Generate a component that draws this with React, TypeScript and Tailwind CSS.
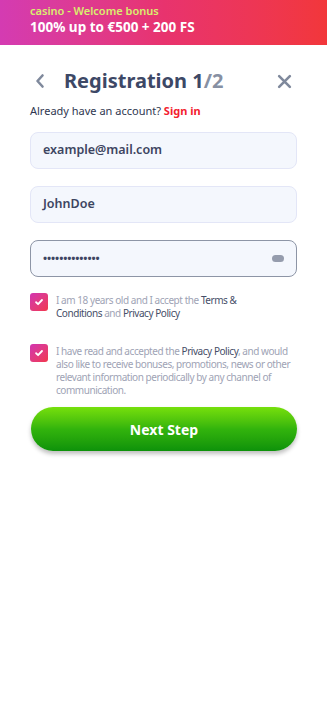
import React from 'react';

function Checkbox() {
  return (
    <div className="w-[18px] h-[18px] rounded-[3px] bg-gradient-to-br from-[#d233b0] to-[#f2364a] flex items-center justify-center shrink-0">
      <svg className="w-[10px] h-[10px]" viewBox="0 0 12 12" fill="none" stroke="white" strokeWidth="2.2" strokeLinecap="round" strokeLinejoin="round">
        <path d="M2.5 6.3l2.4 2.3L9.6 3.6" />
      </svg>
    </div>
  );
}

export default function App() {
  return (
    <div className="w-[327px] min-h-[724px] bg-white" style={{ fontFamily: '"Noto Sans", "Open Sans", sans-serif' }}>
      {/* bonus banner */}
      <div className="h-[45px] bg-gradient-to-r from-[#d43bb2] via-[#e8336e] to-[#f2373a] pl-[30px] pt-[3px]">
        <div className="text-[11px] leading-[15px] font-semibold text-[#d9ef6e]">casino - Welcome bonus</div>
        <div className="text-[13.5px] leading-[18px] font-bold text-white">100% up to €500 + 200 FS</div>
      </div>

      <div className="px-[30px]">
        {/* header */}
        <div className="flex items-center mt-[22px] h-[28px]">
          <svg className="w-[12px] h-[16px] ml-[4px]" viewBox="0 0 12 16" fill="none" stroke="#7f899c" strokeWidth="2.6" strokeLinecap="round" strokeLinejoin="round">
            <path d="M8.5 2.5L3.5 8l5 5.5" />
          </svg>
          <h1 className="ml-[18px] text-[20px] font-bold text-[#3d4866]">
            Registration 1<span className="text-[#8790a3]">/2</span>
          </h1>
          <svg className="ml-auto mr-[5px] w-[15px] h-[15px]" viewBox="0 0 14 14" fill="none" stroke="#7f899c" strokeWidth="2.4" strokeLinecap="round">
            <path d="M2 2l10 10M12 2L2 12" />
          </svg>
        </div>

        <p className="mt-[9px] text-[11px] leading-[14px] text-[#2f3750]">
          Already have an account? <span className="font-bold text-[#f3212e]">Sign in</span>
        </p>

        {/* fields */}
        <div className="mt-[14px] flex flex-col gap-[17px]">
          <div className="h-[37px] rounded-[8px] bg-[#f4f7fd] border border-[#e3e6f7] flex items-center px-[12px] text-[12.5px] font-semibold text-[#3d4561]">
            example@mail.com
          </div>
          <div className="h-[37px] rounded-[8px] bg-[#f4f7fd] border border-[#e3e6f7] flex items-center px-[12px] text-[12.5px] font-semibold text-[#3d4561]">
            JohnDoe
          </div>
          <div className="h-[37px] rounded-[8px] bg-[#f4f7fd] border-[1.5px] border-[#8d95a6] flex items-center px-[12px] font-bold text-[#3d4561]">
            <span className="text-[11px] tracking-[-0.1px]">••••••••••••••</span>
            <span className="ml-auto w-[12px] h-[7px] rounded-full bg-[#959cad]" />
          </div>
        </div>

        {/* agreements */}
        <div className="mt-[16px] flex gap-[8px]">
          <Checkbox />
          <p className="text-[10px] leading-[13px] tracking-[-0.45px] text-[#9ea3b5] pt-[1px]">
            I am 18 years old and I accept the <span className="text-[#464e68]">Terms &amp;<br />Conditions</span> and <span className="text-[#464e68]">Privacy Policy</span>
          </p>
        </div>

        <div className="mt-[24px] flex gap-[8px]">
          <Checkbox />
          <p className="text-[10px] leading-[13px] tracking-[-0.45px] text-[#9ea3b5] pt-[1px] pr-[2px]">
            I have read and accepted the <span className="text-[#464e68]">Privacy Policy</span>, and would also like to receive bonuses, promotions, news or other relevant information periodically by any channel of communication.
          </p>
        </div>

        <button className="mt-[10px] w-[266px] ml-[1px] h-[44px] rounded-full bg-gradient-to-b from-[#76e00c] via-[#32b40d] to-[#0c920a] shadow-[0_3px_4px_rgba(0,0,0,0.25)] text-white text-[14px] font-bold">
          Next Step
        </button>
      </div>
    </div>
  );
}
